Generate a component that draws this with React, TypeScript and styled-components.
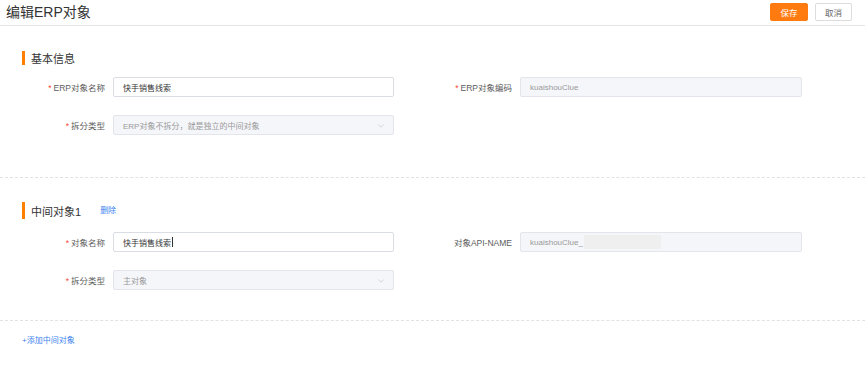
import React from "react";
import styled, { createGlobalStyle } from "styled-components";
import { ChevronDown } from "lucide-react";

const GlobalStyle = createGlobalStyle`
  html, body {
    margin: 0;
    padding: 0;
    background: #fff;
  }
  body {
    font-family: "Liberation Sans", "Noto Sans CJK SC", sans-serif;
    color: #333;
  }
`;

const Page = styled.div`
  width: 865px;
  min-height: 386px;
  background: #fff;
`;

const Header = styled.header`
  height: 25px;
  display: flex;
  align-items: center;
  justify-content: space-between;
  padding: 0 13px 0 6px;
  border-bottom: 1px solid #e4e4e4;
`;

const PageTitle = styled.h1`
  margin: 0;
  font-size: 14px;
  font-weight: 400;
  color: #333;
  line-height: 25px;
`;

const Actions = styled.div`
  display: flex;
  gap: 7px;
  margin-top: -1px;
`;

const Button = styled.button<{ $primary?: boolean }>`
  height: 18px;
  width: ${(p) => (p.$primary ? "38px" : "37px")};
  padding: 0;
  font-family: inherit;
  font-size: 8.5px;
  border-radius: 2px;
  cursor: pointer;
  border: 1px solid ${(p) => (p.$primary ? "#ff7a0f" : "#dcdcdc")};
  background: ${(p) => (p.$primary ? "#ff7a0f" : "#fff")};
  color: ${(p) => (p.$primary ? "#fff" : "#666")};
`;

const Section = styled.section<{ $top: number; $bottom: number }>`
  padding: ${(p) => p.$top}px 0 ${(p) => p.$bottom}px;
  border-bottom: 1px dashed #e2e2e2;
`;

const SectionHead = styled.div<{ $barHeight: number; $gap: number }>`
  display: flex;
  align-items: center;
  gap: 19px;
  padding-left: 22px;
  height: ${(p) => p.$barHeight}px;
  margin-bottom: ${(p) => p.$gap}px;
`;

const SectionTitle = styled.h2`
  margin: 0;
  height: 100%;
  display: flex;
  align-items: center;
  border-left: 3px solid #ff8000;
  padding-left: 6px;
  font-size: 11px;
  font-weight: 400;
  color: #333;
`;

const LinkText = styled.a`
  font-size: 8px;
  line-height: 10px;
  color: #3d85f0;
  text-decoration: none;
  cursor: pointer;
`;

const FormGrid = styled.div`
  display: grid;
  grid-template-columns: 394px 395px;
  column-gap: 13px;
  row-gap: 18px;
`;

const Field = styled.div`
  display: grid;
  grid-template-columns: 105px 1fr;
  column-gap: 8px;
  align-items: center;
`;

const Label = styled.label`
  text-align: right;
  font-size: 8.5px;
  color: #5c5c5c;
  white-space: nowrap;
`;

const Star = styled.span`
  color: #f5473b;
  margin-right: 2px;
`;

const Control = styled.div<{ $disabled?: boolean }>`
  position: relative;
  height: 20px;
  box-sizing: border-box;
  display: flex;
  align-items: center;
  padding: 0 9px;
  border: 1px solid ${(p) => (p.$disabled ? "#e3e5ea" : "#dadde3")};
  border-radius: 2px;
  background: ${(p) => (p.$disabled ? "#f5f6f9" : "#fff")};
  font-size: 8px;
  color: ${(p) => (p.$disabled ? "#999" : "#333")};
  white-space: nowrap;
`;

const Chevron = styled(ChevronDown)`
  position: absolute;
  right: 7px;
  top: 5px;
  color: #c0c0c0;
`;

const Caret = styled.span`
  display: inline-block;
  width: 1px;
  height: 10px;
  background: #333;
  margin-left: 1px;
`;

const Masked = styled.span`
  display: inline-block;
  width: 77px;
  height: 14px;
  margin-left: 1px;
  background: #efefef;
`;

const Footer = styled.div`
  padding: 15px 0 0 22px;
  font-size: 8px;
  line-height: 10px;
`;

interface FieldRowProps {
  label: string;
  required?: boolean;
  children: React.ReactNode;
}

const FieldRow: React.FC<FieldRowProps> = ({ label, required, children }) => (
  <Field>
    <Label>
      {required && <Star>*</Star>}
      {label}
    </Label>
    {children}
  </Field>
);

const App: React.FC = () => {
  return (
    <Page>
      <GlobalStyle />
      <Header>
        <PageTitle>编辑ERP对象</PageTitle>
        <Actions>
          <Button $primary>保存</Button>
          <Button>取消</Button>
        </Actions>
      </Header>

      <Section $top={25} $bottom={42}>
        <SectionHead $barHeight={14} $gap={12}>
          <SectionTitle>基本信息</SectionTitle>
        </SectionHead>
        <FormGrid>
          <FieldRow label="ERP对象名称" required>
            <Control>快手销售线索</Control>
          </FieldRow>
          <FieldRow label="ERP对象编码" required>
            <Control $disabled>kuaishouClue</Control>
          </FieldRow>
          <FieldRow label="拆分类型" required>
            <Control $disabled>
              ERP对象不拆分，就是独立的中间对象
              <Chevron size={10} strokeWidth={1.5} />
            </Control>
          </FieldRow>
        </FormGrid>
      </Section>

      <Section $top={24} $bottom={30}>
        <SectionHead $barHeight={17} $gap={13}>
          <SectionTitle>中间对象1</SectionTitle>
          <LinkText>删除</LinkText>
        </SectionHead>
        <FormGrid>
          <FieldRow label="对象名称" required>
            <Control>
              快手销售线索
              <Caret />
            </Control>
          </FieldRow>
          <FieldRow label="对象API-NAME">
            <Control $disabled>
              kuaishouClue_
              <Masked />
            </Control>
          </FieldRow>
          <FieldRow label="拆分类型" required>
            <Control $disabled>
              主对象
              <Chevron size={10} strokeWidth={1.5} />
            </Control>
          </FieldRow>
        </FormGrid>
      </Section>

      <Footer>
        <LinkText>+添加中间对象</LinkText>
      </Footer>
    </Page>
  );
};

export default App;
